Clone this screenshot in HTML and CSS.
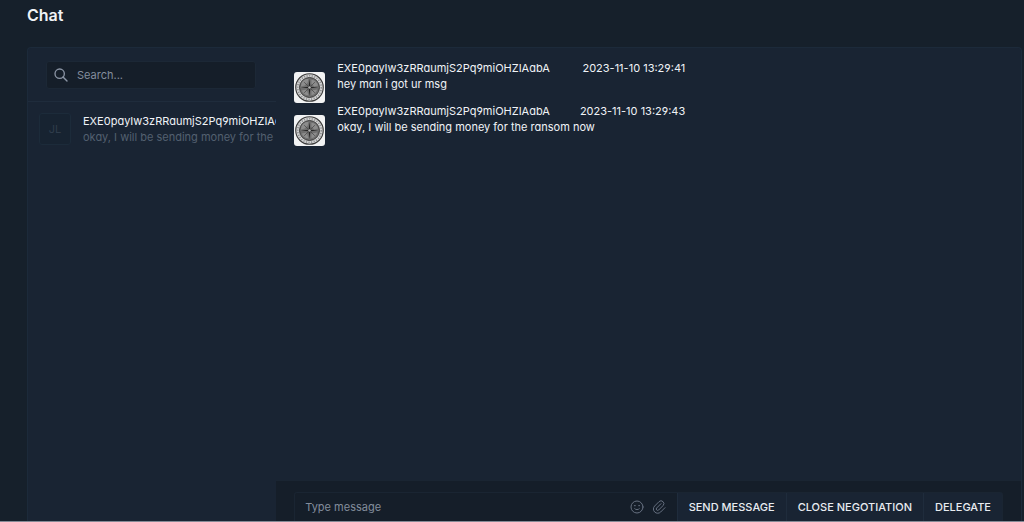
FILE: index.html
```html
<!DOCTYPE html>
<html lang="en">
<head>
    <meta charset="UTF-8">
    <meta name="viewport" content="width=device-width, initial-scale=1.0">
    <title>Chat</title>
    <link rel="stylesheet" href="styles.css">
</head>
<body>
    <!-- shared drawings -->
    <svg class="defs" aria-hidden="true">
        <symbol id="seal" viewBox="0 0 32 32">
            <circle cx="16" cy="16" r="14.2" fill="#d2d2d2" stroke="#3c3c3c" stroke-width="1.2"/>
            <circle cx="16" cy="16" r="12.2" fill="none" stroke="#8e9092" stroke-width="1.8" stroke-dasharray="1.2 1.5"/>
            <circle cx="16" cy="16" r="10.3" fill="#6f6f6f" stroke="#3a3a3a" stroke-width="1"/>
            <path d="M8 11c2-3 5-4 7-4l-1 4-3 3-4 1zM18 8c3 0 6 3 7 6l-4 1-3-3zM8 19l5-1 2 6c-3 0-6-2-7-5zM18 19l6-1c-1 3-3 5-6 6z" fill="#8c8c8c"/>
            <path d="M10.500 10.500l11 11M21.500 10.500l-11 11" stroke="#4a4a4a" stroke-width=".8"/>
            <path d="M16 7l.9 8.100L25 16l-8.100.9L16 25l-.9-8.100L7 16l8.100-.9z" fill="#262626"/>
            <circle cx="16" cy="16" r="1.300" fill="#b5b5b5"/>
        </symbol>
    </svg>

    <main class="page">
        <h1 class="page-title">Chat</h1>

        <div class="card">
            <aside class="sidebar">
                <form class="search">
                    <label class="search-box">
                        <svg class="icon" viewBox="0 0 24 24" aria-hidden="true">
                            <circle cx="10" cy="10" r="7"/>
                            <path d="M21 21l-6-6"/>
                        </svg>
                        <input type="text" placeholder="Search..." aria-label="Search">
                    </label>
                </form>
                <a href="#" class="contact">
                    <span class="initials">JL</span>
                    <span class="contact-body">
                        <span class="contact-name">EXE0payIw3zRRaumjS2Pq9miOHZIAabA</span>
                        <span class="contact-last">okay, I will be sending money for the ransom now</span>
                    </span>
                </a>
            </aside>

            <section class="chat">
                <div class="messages">
                    <div class="message">
                        <svg class="avatar" role="img" aria-label="Avatar"><use href="#seal"/></svg>
                        <div class="bubble">
                            <div class="message-head">
                                <span>EXE0payIw3zRRaumjS2Pq9miOHZIAabA</span>
                                <time>2023-11-10 13:29:41</time>
                            </div>
                            <div>hey man i got ur msg</div>
                        </div>
                    </div>
                    <div class="message">
                        <svg class="avatar" role="img" aria-label="Avatar"><use href="#seal"/></svg>
                        <div class="bubble">
                            <div class="message-head">
                                <span>EXE0payIw3zRRaumjS2Pq9miOHZIAabA</span>
                                <time>2023-11-10 13:29:43</time>
                            </div>
                            <div>okay, I will be sending money for the ransom now</div>
                        </div>
                    </div>
                </div>

                <form class="composer">
                    <div class="input-group">
                        <input type="text" placeholder="Type message" aria-label="Type message">
                        <a href="#" class="tool" aria-label="Add emoji">
                            <svg class="icon" viewBox="0 0 24 24" aria-hidden="true">
                                <circle cx="12" cy="12" r="9"/>
                                <path d="M8 10h1.500M14.500 10h1.500M8.500 14.500a4.500 4.500 0 0 0 7 0"/>
                            </svg>
                        </a>
                        <a href="#" class="tool" aria-label="Attach file">
                            <svg class="icon" viewBox="0 0 24 24" aria-hidden="true">
                                <path d="M15 7l-6.500 6.500a1.500 1.500 0 0 0 3 3l6.500-6.500a3 3 0 0 0-6-6l-6.500 6.500a4.500 4.500 0 0 0 9 9l6.500-6.500"/>
                            </svg>
                        </a>
                        <button type="button">SEND MESSAGE</button>
                        <button type="button">CLOSE NEGOTIATION</button>
                        <button type="button">DELEGATE</button>
                    </div>
                </form>
            </section>
        </div>
    </main>
</body>
</html>
```
FILE: styles.css
```css
* {
    box-sizing: border-box;
}

body {
    margin: 0;
    background-color: #16202b;
    color: #f0f3f7;
    font-family: Inter, "Liberation Sans", sans-serif;
    font-size: 11px;
    line-height: 16px;
    font-feature-settings: "cv03", "cv04", "cv11";
}

.defs {
    position: absolute;
    width: 0;
    height: 0;
}

.page {
    display: flex;
    flex-direction: column;
    height: 100vh;
    padding: 5px 2px 0 27px;
    border-bottom: 1px solid #858a96;
}

.page-title {
    margin: 0 0 22px;
    font-size: 16px;
    line-height: 20px;
    font-weight: 600;
    font-feature-settings: normal;
}

.card {
    flex: 1;
    display: flex;
    min-height: 0;
    background-color: #192433;
    border: 1px solid #1c2a3a;
    border-bottom: none;
    border-radius: 4px 4px 0 0;
}

.sidebar {
    flex: 0 0 25%;
    min-width: 0;
}

.search {
    padding: 13px 20px 12px 18px;
    border-bottom: 1px solid #1f2c3c;
}

.search-box {
    display: flex;
    align-items: center;
    gap: 8px;
    height: 28px;
    padding: 0 6px;
    background-color: #151e29;
    border: 1px solid #1c2836;
    border-radius: 3px;
    color: #8b95a5;
}

.icon {
    flex: none;
    display: block;
    width: 16px;
    height: 16px;
    fill: none;
    stroke: currentColor;
    stroke-width: 2;
    stroke-linecap: round;
    stroke-linejoin: round;
}

input {
    flex: 1;
    min-width: 0;
    padding: 0;
    border: none;
    outline: none;
    background: none;
    color: #f0f3f7;
    font-family: inherit;
    font-size: 11px;
}

input::placeholder {
    color: #838d9c;
    opacity: 1;
}

.contact {
    display: flex;
    align-items: center;
    gap: 12px;
    padding: 11px 0 11px 11px;
    color: inherit;
    text-decoration: none;
}

.initials {
    flex: none;
    width: 32px;
    height: 32px;
    border: 1px solid #1c2b3a;
    border-radius: 3px;
    background-color: #172331;
    color: #2f3c4b;
    line-height: 30px;
    text-align: center;
}

.contact-body {
    min-width: 0;
}

.contact-name,
.contact-last {
    display: block;
    overflow: hidden;
    white-space: nowrap;
}

.contact-last {
    color: #536070;
}

.chat {
    flex: 1;
    display: flex;
    flex-direction: column;
    min-width: 0;
}

.messages {
    flex: 1;
    padding: 12px 18px;
}

.message {
    display: flex;
    align-items: flex-end;
    gap: 12px;
}

.avatar {
    flex: none;
    width: 31px;
    height: 31px;
    margin-top: 12px;
    border-radius: 3px;
    background-color: #f2f3f4;
}

.bubble {
    flex: 0 1 348px;
    align-self: flex-start;
}

.message-head {
    display: flex;
    justify-content: space-between;
}

.composer {
    padding: 11px 18px 0;
    background-color: #151e29;
    border-top: 1px solid #1a2532;
}

.input-group {
    display: flex;
    align-items: center;
    height: 29px;
    padding-left: 10px;
    border: 1px solid #1a2532;
    border-bottom: none;
    border-radius: 3px 3px 0 0;
}

.tool {
    margin-right: 6px;
    color: #667080;
}

.tool .icon {
    stroke-width: 1.5;
}

.tool + button {
    margin-left: 4px;
}

button {
    height: 100%;
    padding: 0 11px;
    border: none;
    border-left: 1px solid #1f2c3c;
    background-color: #192433;
    color: #e8ecf1;
    font-family: inherit;
    font-size: 11px;
    font-weight: 500;
    cursor: pointer;
}
```
